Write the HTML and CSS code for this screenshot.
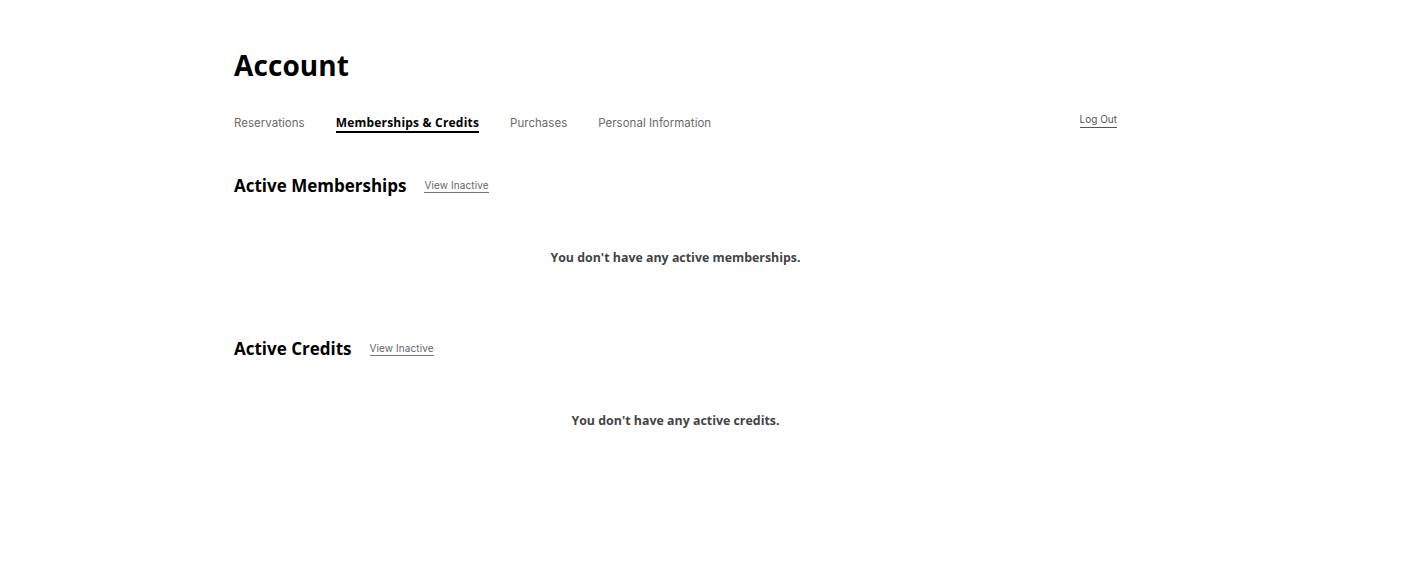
FILE: index.html
```html
<!DOCTYPE html>
<html lang="en">
<head>
<meta charset="utf-8">
<title>Account</title>
<link rel="stylesheet" href="styles.css">
</head>
<body>
<main class="page">
  <h1 class="title">Account</h1>
  <nav class="tabs">
    <div class="tab-list">
      <a class="tab">Reservations</a>
      <a class="tab active">Memberships &amp; Credits</a>
      <a class="tab">Purchases</a>
      <a class="tab">Personal Information</a>
    </div>
    <a class="logout">Log Out</a>
  </nav>

  <section class="section">
    <div class="section-head">
      <h2 class="section-title">Active Memberships</h2>
      <a class="view-link">View Inactive</a>
    </div>
    <p class="empty">You don't have any active memberships.</p>
  </section>

  <section class="section">
    <div class="section-head">
      <h2 class="section-title">Active Credits</h2>
      <a class="view-link">View Inactive</a>
    </div>
    <p class="empty">You don't have any active credits.</p>
  </section>
</main>
</body>
</html>
```
FILE: styles.css
```css
* { box-sizing: border-box; }
html, body { margin: 0; padding: 0; background: #fff; }
body { font-family: "Open Sans", "DejaVu Sans", sans-serif; color: #000; }

.page {
  width: 883px;
  margin-left: 234px;
  padding-top: 46px;
}

.title {
  margin: 0;
  font-size: 28px;
  font-weight: 700;
  line-height: 38px;
  letter-spacing: 0.1px;
}

.tabs {
  display: flex;
  justify-content: space-between;
  align-items: flex-start;
  margin-top: 31px;
  height: 24px;
}

.tab-list {
  display: flex;
  gap: 31px;
}

.tab {
  font-family: "Inter", sans-serif;
  font-size: 11.5px;
  color: #6b6b6b;
  line-height: 16px;
  padding-bottom: 0;
  border-bottom: 2px solid transparent;
  letter-spacing: 0.02px;
}

.tab.active {
  font-family: "Open Sans", sans-serif;
  font-weight: 700;
  color: #000;
  font-size: 12px;
  letter-spacing: 0.2px;
  border-bottom-color: #000;
}

.logout {
  font-family: "Inter", sans-serif;
  font-size: 10px;
  color: #555;
  line-height: 13px;
  margin-top: -2px;
  border-bottom: 1px solid #555;
  padding-bottom: 1px;
}

.section { margin-top: 35px; }
.section + .section { margin-top: 70px; }

.section-head {
  display: flex;
  align-items: center;
  gap: 18px;
}

.section-title {
  margin: 0;
  font-size: 17px;
  font-weight: 700;
  line-height: 24px;
}

.view-link {
  font-family: "Inter", sans-serif;
  font-size: 10px;
  color: #666;
  line-height: 12px;
  padding-bottom: 1px;
  border-bottom: 1px solid #777;
  margin-top: 0;
  letter-spacing: 0.1px;
}

.empty {
  margin: 51px 0 0;
  text-align: center;
  font-size: 12.4px;
  font-weight: 700;
  color: #444;
  line-height: 18px;
}
```
